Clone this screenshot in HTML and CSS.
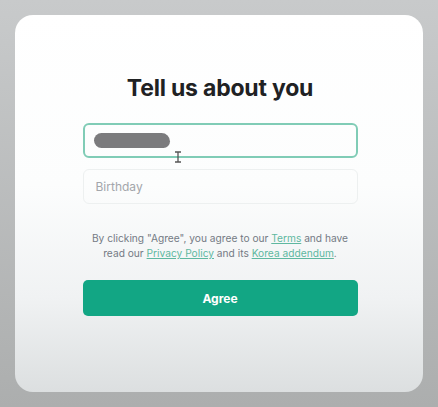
FILE: index.html
```html
<!DOCTYPE html>
<html lang="en">
<head>
  <meta charset="UTF-8" />
  <meta name="viewport" content="width=device-width, initial-scale=1.0" />
  <title>Tell us about you</title>
  <link rel="stylesheet" href="styles.css">
</head>
<body>
  <div class="card">
    <div class="about">
      <h2>Tell us about you</h2>
      <div class="field active">
        <span class="scribble"></span>
        <svg class="caret" width="8" height="12" viewBox="0 0 8 12">
          <path d="M1 1h6M4 1v10M1 11h6" stroke="#555" stroke-width="1.3" fill="none"/>
        </svg>
      </div>
      <div class="field">
        <span class="placeholder">Birthday</span>
      </div>
      <p class="terms">By clicking "Agree", you agree to our <a href="#">Terms</a> and have read our <a href="#">Privacy Policy</a> and its <a href="#">Korea addendum</a>.</p>
      <button type="button">Agree</button>
    </div>
  </div>
</body>
</html>
```

FILE: styles.css
```css
body, html {
  height: 100%;
  margin: 0;
  font-family: Inter, "Noto Sans", sans-serif;
}
body {
  background: linear-gradient(#c8cacb, #acaeae);
  padding: 15px;
  box-sizing: border-box;
}
.card {
  height: 377px;
  width: 408px;
  background: linear-gradient(#ffffff 0%, #fcfdfd 45%, #f0f2f3 75%, #dcdfe0 100%);
  border-radius: 18px;
  display: flex;
  justify-content: center;
}
.about {
  width: 275px;
  padding-top: 59px;
  margin-left: 2px;
}
.about h2 {
  margin: 0 0 21px;
  font-size: 23px;
  line-height: 28px;
  font-weight: 700;
  color: #202123;
  text-align: center;
  letter-spacing: -0.2px;
}
.field {
  position: relative;
  height: 35px;
  border: 1px solid #edf0f0;
  border-radius: 6px;
  box-sizing: border-box;
  display: flex;
  align-items: center;
  padding: 0 12px;
  margin-bottom: 11px;
}
.field.active {
  border: 2px solid #80ccb6;
}
.scribble {
  width: 76px;
  height: 15px;
  border-radius: 8px 9px 7px 8px;
  background: #7b7b7d;
  margin-left: -3px;
}
.caret {
  position: absolute;
  left: 89px;
  top: 26px;
}
.placeholder {
  font-size: 12px;
  color: #a3a6ab;
}
.terms {
  margin: 27px 0 19px;
  font-size: 10.2px;
  line-height: 15px;
  color: #747a84;
  text-align: center;
}
.terms a {
  color: #5fb8a0;
  text-decoration: underline;
}
button {
  display: block;
  width: 100%;
  height: 36px;
  border: none;
  border-radius: 5px;
  background-color: #12a684;
  color: #fff;
  font-family: inherit;
  font-size: 12px;
  font-weight: 700;
  cursor: pointer;
}
```
